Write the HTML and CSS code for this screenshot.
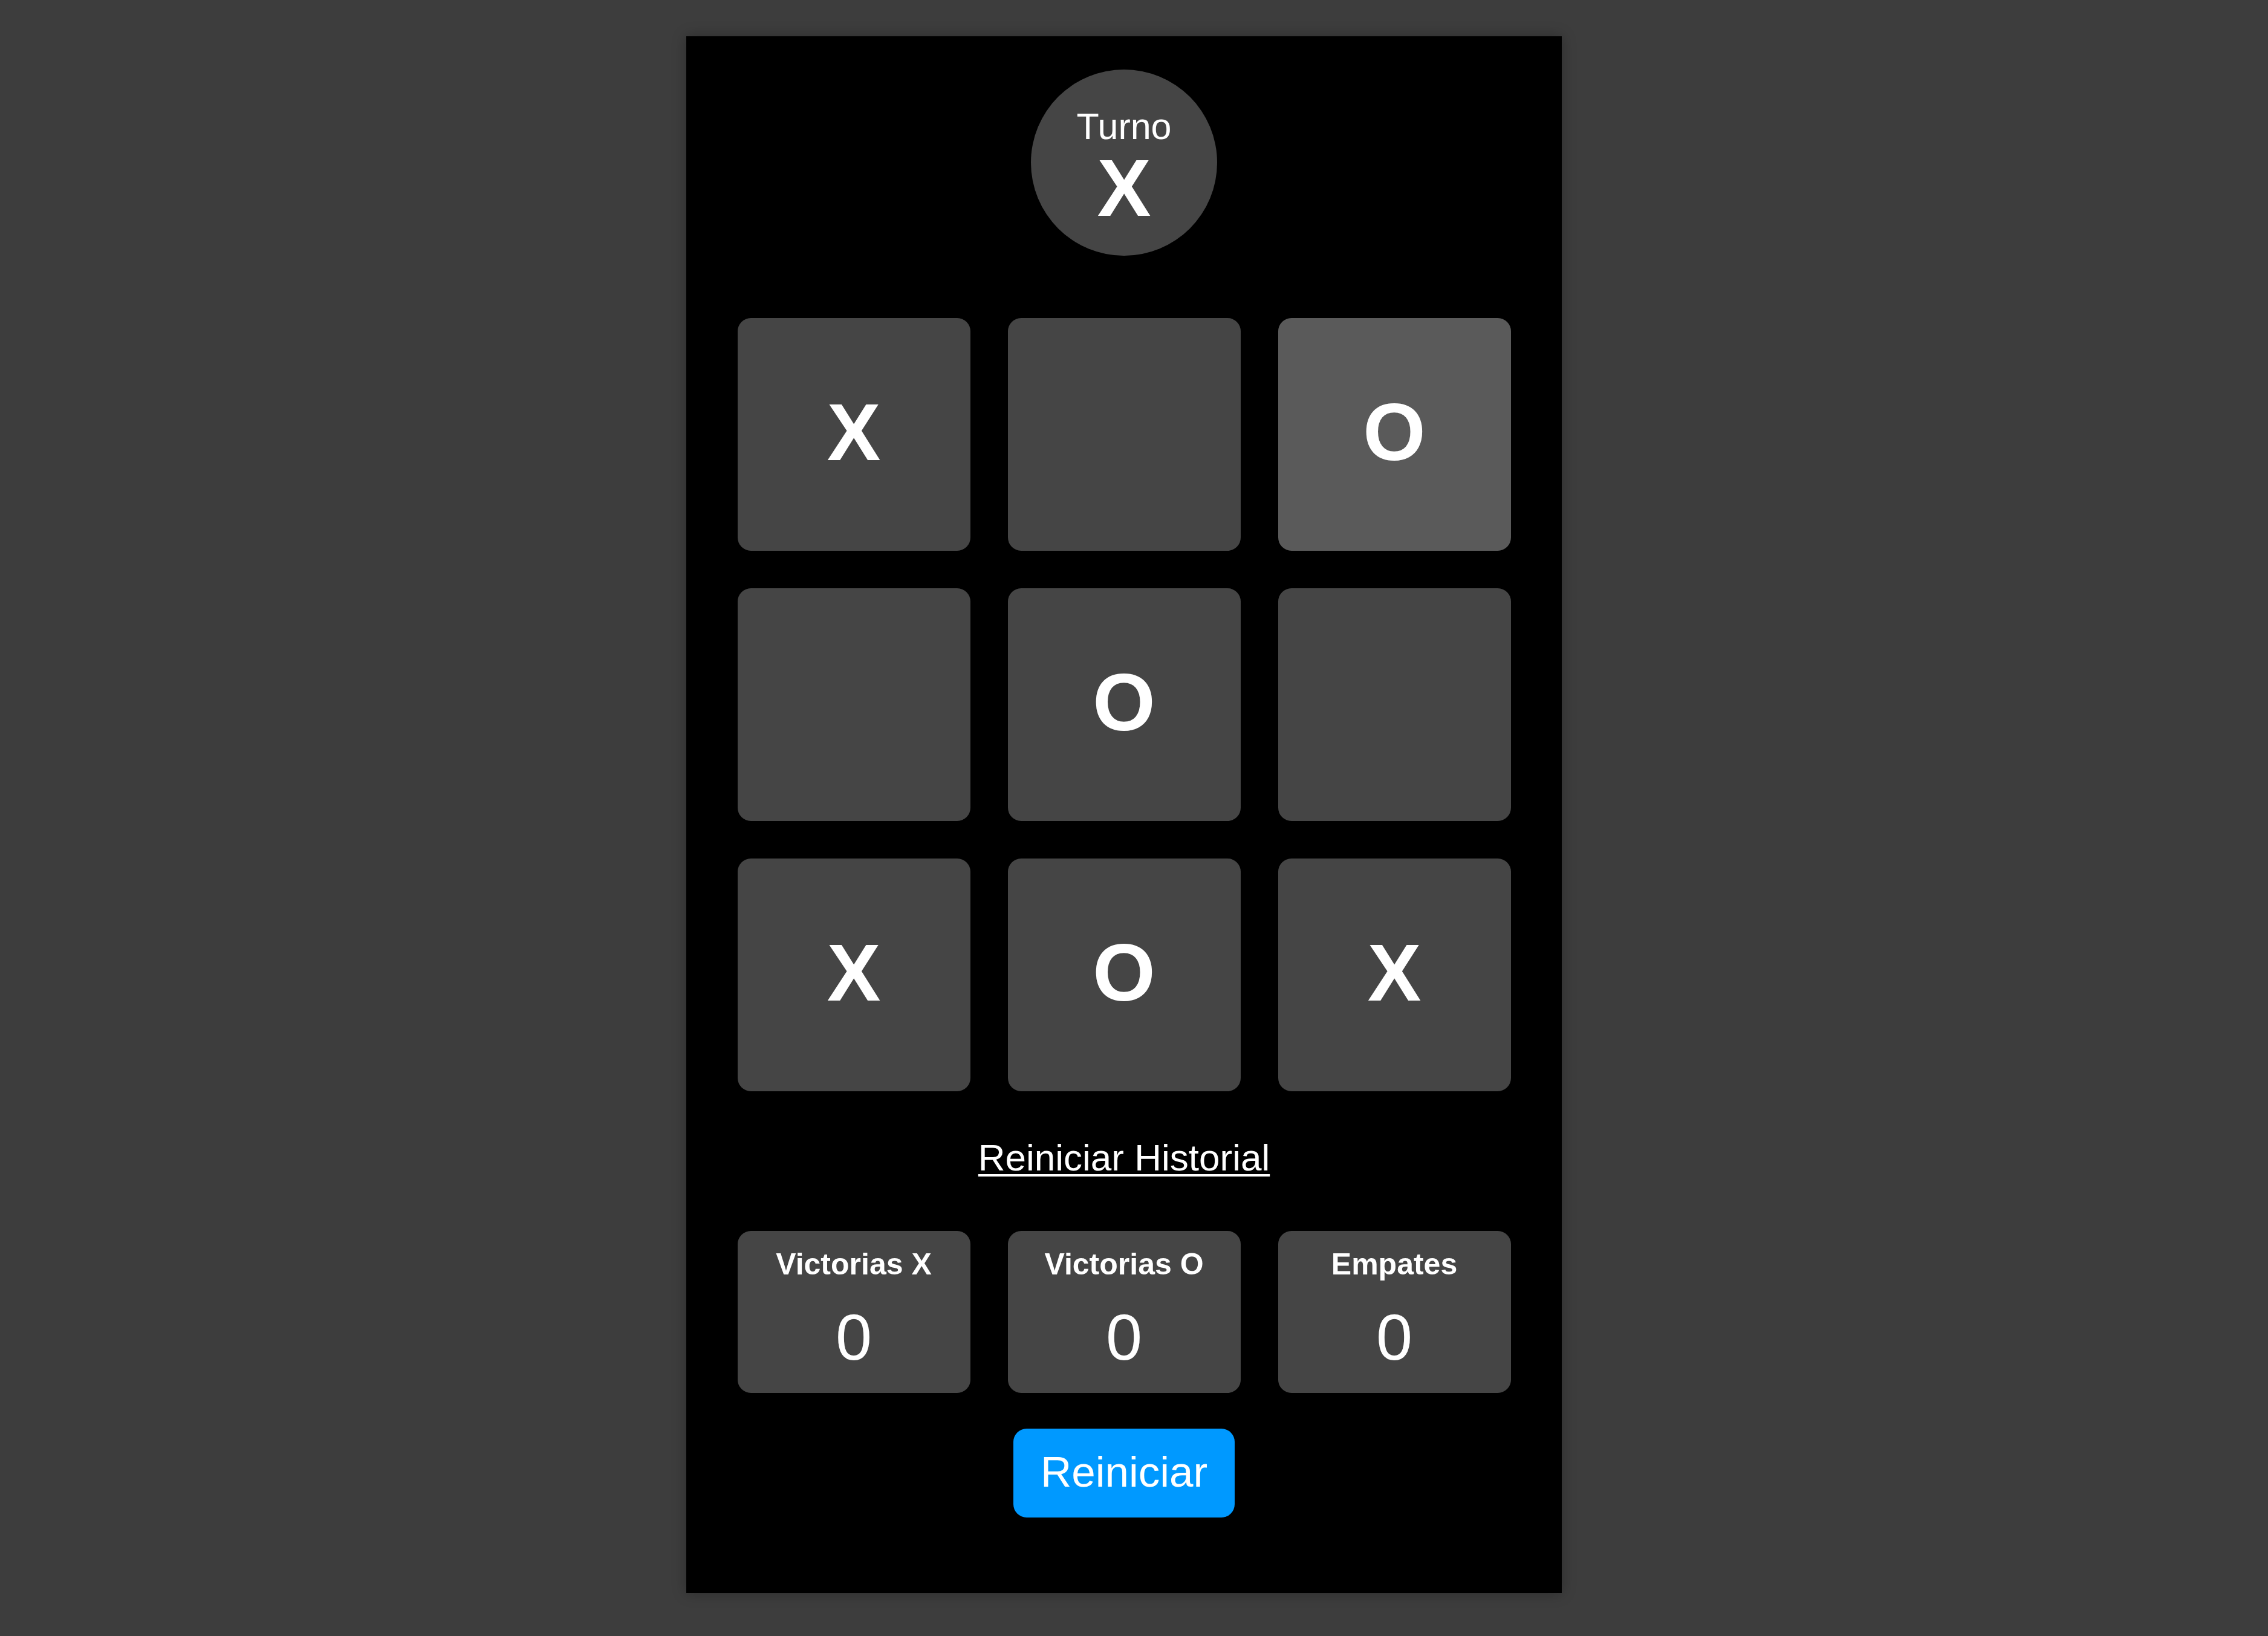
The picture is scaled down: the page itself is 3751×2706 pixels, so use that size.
FILE: index.html
```html
<!DOCTYPE html>
<html lang="es">
<head>
<meta charset="utf-8">
<title>Tres en raya</title>
<link rel="stylesheet" href="styles.css">
</head>
<body>
<main class="game">
  <div class="turn">
    <span class="turn-label">Turno</span>
    <span class="turn-mark">X</span>
  </div>
  <div class="board">
    <button class="cell">X</button>
    <button class="cell"></button>
    <button class="cell cell-hover">O</button>
    <button class="cell"></button>
    <button class="cell">O</button>
    <button class="cell"></button>
    <button class="cell">X</button>
    <button class="cell">O</button>
    <button class="cell">X</button>
  </div>
  <button class="history-link">Reiniciar Historial</button>
  <div class="stats">
    <div class="stat">
      <span class="stat-label">Victorias X</span>
      <span class="stat-value">0</span>
    </div>
    <div class="stat">
      <span class="stat-label">Victorias O</span>
      <span class="stat-value">0</span>
    </div>
    <div class="stat">
      <span class="stat-label">Empates</span>
      <span class="stat-value">0</span>
    </div>
  </div>
  <button class="reset">Reiniciar</button>
</main>
</body>
</html>
```
FILE: styles.css
```css
* {
  box-sizing: border-box;
}

html, body {
  margin: 0;
  padding: 0;
}

body {
  background: #3d3d3d;
  min-height: 2706px;
  display: flex;
  justify-content: center;
  align-items: flex-start;
  padding: 60px 33px 0 0;
  font-family: "Liberation Sans", Arial, sans-serif;
  color: #ffffff;
}

.game {
  width: 1448px;
  background: #000000;
  padding: 55px 84px 125px;
  display: flex;
  flex-direction: column;
  align-items: center;
  box-shadow: 0 0 22px rgba(0, 0, 0, 0.28);
}

.turn {
  width: 308px;
  height: 308px;
  border-radius: 50%;
  background: #454545;
  display: flex;
  flex-direction: column;
  align-items: center;
  padding-top: 64px;
}

.turn-label {
  font-size: 61px;
  line-height: 61px;
}

.turn-mark {
  font-size: 133px;
  line-height: 133px;
  font-weight: bold;
  margin-top: 5px;
}

.board {
  margin-top: 103px;
  display: grid;
  grid-template-columns: repeat(3, 385px);
  grid-auto-rows: 385px;
  gap: 62px;
}

.cell {
  border: none;
  margin: 0;
  padding: 0 0 8px;
  border-radius: 22px;
  background: #454545;
  color: #ffffff;
  font-family: "Liberation Sans", Arial, sans-serif;
  font-size: 133px;
  font-weight: bold;
  display: flex;
  align-items: center;
  justify-content: center;
}

.cell-hover {
  background: #5a5a5a;
}

.history-link {
  margin-top: 74px;
  border: none;
  background: none;
  padding: 0;
  color: #ffffff;
  font-family: "Liberation Sans", Arial, sans-serif;
  font-size: 62px;
  line-height: 72px;
  text-decoration: underline;
  text-decoration-thickness: 4px;
  text-underline-offset: 6px;
}

.stats {
  margin-top: 85px;
  display: grid;
  grid-template-columns: repeat(3, 385px);
  gap: 62px;
}

.stat {
  background: #454545;
  border-radius: 22px;
  padding: 26px 0 30px;
  display: flex;
  flex-direction: column;
  align-items: center;
}

.stat-label {
  font-size: 50px;
  line-height: 58px;
  font-weight: bold;
}

.stat-value {
  margin-top: 30px;
  font-size: 108px;
  line-height: 124px;
}

.reset {
  margin-top: 59px;
  border: none;
  border-radius: 22px;
  background: #0099ff;
  color: #ffffff;
  font-family: "Liberation Sans", Arial, sans-serif;
  font-size: 71px;
  line-height: 82px;
  padding: 31px 45px 34px;
}
```
